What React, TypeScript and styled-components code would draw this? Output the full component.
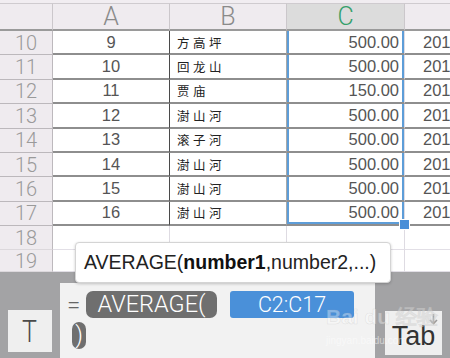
import React from "react";
import styled, { createGlobalStyle, css } from "styled-components";

const Global = createGlobalStyle`
  html, body { margin: 0; padding: 0; background: #fff; }
  body { width: 450px; height: 358px; overflow: hidden; font-family: "Liberation Sans", Arial, sans-serif; }
  * { box-sizing: border-box; }
`;

const Screen = styled.div`
  position: relative;
  width: 450px;
  height: 358px;
  overflow: hidden;
  display: flex;
  flex-direction: column;
`;

const Sheet = styled.div`
  height: 272px;
  flex: none;
  overflow: hidden;
  background: #f1edf1;
  padding-top: 3px;
  display: grid;
  grid-template-columns: 53px 117px 117px 118px 60px;
  grid-template-rows: 28px repeat(8, 24.4px) 24px 22px;
`;

const HeadCell = styled.div<{ $active?: boolean }>`
  border-top: 1px solid #cfcbcf;
  border-right: 1px solid #cbc7cb;
  border-bottom: 2px solid #9a9a9a;
  background: ${(p) => (p.$active ? "#dcdcdc" : "#efebef")};
  color: ${(p) => (p.$active ? "#35a06a" : "#8a8a8a")};
  font-family: Roboto, "Liberation Sans", sans-serif;
  font-weight: 300;
  font-size: 25px;
  display: flex;
  align-items: center;
  justify-content: center;
  line-height: 1;
`;

const RowHead = styled.div<{ $empty?: boolean }>`
  background: #efebef;
  border-right: 1px solid #bdb9bd;
  border-bottom: ${(p) => (p.$empty ? "1px solid #dcd8dc" : "1px solid #bcb8bc")};
  color: #9a9a9a;
  font-family: Roboto, "Liberation Sans", sans-serif;
  font-weight: 300;
  font-size: 20px;
  display: flex;
  align-items: center;
  justify-content: center;
  line-height: 1;
`;

type Align = "center" | "left" | "right";

const Cell = styled.div<{
  $align?: Align;
  $empty?: boolean;
  $cjk?: boolean;
  $divider?: "dark" | "mid" | "light";
  $sel?: boolean;
  $selEnd?: boolean;
}>`
  position: relative;
  background: #fff;
  border-bottom: ${(p) => (p.$empty ? "1px solid #e2dfe6" : "2px solid #8e8e8e")};
  border-right: 1px solid
    ${(p) => (p.$divider === "dark" ? "#4a4a4a" : p.$divider === "mid" ? "#a8a8a8" : "#dedbe2")};
  display: flex;
  align-items: center;
  justify-content: ${(p) =>
    p.$align === "left" ? "flex-start" : p.$align === "right" ? "flex-end" : "center"};
  padding: 0 ${(p) => (p.$align === "right" ? "5px" : "0")} 0
    ${(p) => (p.$align === "left" ? (p.$cjk ? "7px" : "18px") : "0")};
  font-size: ${(p) => (p.$cjk ? "12.5px" : "16.5px")};
  letter-spacing: ${(p) => (p.$cjk ? "3.5px" : "0")};
  font-family: ${(p) =>
    p.$cjk ? `"Noto Sans CJK SC", sans-serif` : `"Liberation Sans", Arial, sans-serif`};
  color: ${(p) => (p.$cjk ? "#222" : "#555")};
  white-space: nowrap;
  ${(p) =>
    p.$sel &&
    css`
      box-shadow: inset 2px 0 0 #5d9dd8, inset -2px 0 0 #5d9dd8
        ${p.$selEnd ? ", inset 0 -2px 0 #5d9dd8" : ""};
    `}
`;

const Handle = styled.span`
  position: absolute;
  right: -6px;
  bottom: -6px;
  width: 11px;
  height: 11px;
  background: #4a8fd8;
  border: 1px solid #fff;
  z-index: 2;
`;

const Tooltip = styled.div`
  position: absolute;
  left: 75px;
  top: 242px;
  width: 316px;
  height: 41px;
  background: #fff;
  border: 1px solid #d4d4d4;
  border-radius: 4px;
  box-shadow: 0 1px 3px rgba(0, 0, 0, 0.2);
  display: flex;
  align-items: center;
  padding-left: 8px;
  font-family: "Liberation Sans", Arial, sans-serif;
  font-size: 19.5px;
  color: #222;
  z-index: 5;
  white-space: nowrap;
  b { font-weight: 700; color: #111; }
`;

const Bar = styled.div`
  flex: 1;
  background: #a3a3a5;
  display: flex;
  align-items: flex-end;
  padding-left: 8px;
`;

const KeyButton = styled.div<{ $w: number; $h: number; $mb: number }>`
  position: relative;
  width: ${(p) => p.$w}px;
  height: ${(p) => p.$h}px;
  margin-bottom: ${(p) => p.$mb}px;
  background: #efefef;
  display: flex;
  align-items: center;
  justify-content: center;
  flex: none;
`;

const TGlyph = styled.span`
  font-family: Roboto, "Liberation Sans", sans-serif;
  font-weight: 300;
  font-size: 32px;
  line-height: 1;
  color: #4a4a4a;
  transform: scaleX(0.78);
`;

const TabText = styled.span`
  font-family: "Liberation Sans", Arial, sans-serif;
  font-size: 27px;
  line-height: 1;
  color: #333;
  margin-top: 6px;
`;

const Arrow = styled.svg`
  position: absolute;
  right: 4px;
  top: 3px;
`;

const Formula = styled.div`
  width: 315px;
  height: 75px;
  margin-left: 8px;
  margin-right: 10px;
  background: #f2f2f2;
  padding: 8px 0 0 7px;
  display: flex;
  flex-direction: column;
  gap: 4px;
  flex: none;
`;

const Line = styled.div`
  display: flex;
  align-items: center;
`;

const Eq = styled.span`
  font-family: Roboto, "Liberation Sans", sans-serif;
  font-weight: 300;
  font-size: 24px;
  color: #666;
  width: 19px;
  line-height: 1;
`;

const Pill = styled.span<{ $blue?: boolean; $w: number; $ml?: number }>`
  display: inline-flex;
  align-items: center;
  justify-content: center;
  width: ${(p) => p.$w}px;
  height: 27px;
  margin-left: ${(p) => p.$ml ?? 0}px;
  border-radius: ${(p) => (p.$blue ? "3px" : "7px")};
  background: ${(p) => (p.$blue ? "#4a90d9" : "#6f6f6f")};
  color: #fff;
  font-family: Roboto, "Liberation Sans", sans-serif;
  font-weight: 300;
  font-size: ${(p) => (p.$blue ? "21.5px" : "23.5px")};
  line-height: 1;
  overflow: hidden;
  white-space: nowrap;
`;

const Watermark = styled.div`
  position: absolute;
  left: 326px;
  top: 306px;
  font-family: "Liberation Sans", Arial, sans-serif;
  font-weight: 700;
  font-size: 21px;
  color: rgba(255, 255, 255, 0.35);
  -webkit-text-stroke: 0.5px rgba(170, 170, 170, 0.3);
  pointer-events: none;
  z-index: 6;
  line-height: 1;
  small {
    display: block;
    font-size: 10px;
    font-weight: 400;
    margin-top: 9px;
    -webkit-text-stroke: 0;
    color: rgba(255, 255, 255, 0.5);
  }
`;

const rows: [number, string, string][] = [
  [9, "方高坪", "500.00"],
  [10, "回龙山", "500.00"],
  [11, "贾庙", "150.00"],
  [12, "澍山河", "500.00"],
  [13, "滚子河", "500.00"],
  [14, "澍山河", "500.00"],
  [15, "澍山河", "500.00"],
  [16, "澍山河", "500.00"],
];

export default function App() {
  return (
    <Screen>
      <Global />
      <Sheet>
        <HeadCell />
        <HeadCell>A</HeadCell>
        <HeadCell>B</HeadCell>
        <HeadCell $active>C</HeadCell>
        <HeadCell />
        {rows.map(([n, name, amt], i) => {
          const last = i === rows.length - 1;
          return (
            <React.Fragment key={n}>
              <RowHead>{n + 1}</RowHead>
              <Cell $divider="dark">{n}</Cell>
              <Cell $align="left" $cjk $divider="mid">
                {name}
              </Cell>
              <Cell $align="right" $divider="light" $sel $selEnd={last}>
                {amt}
                {last && <Handle />}
              </Cell>
              <Cell $align="left" $divider="light">
                201
              </Cell>
            </React.Fragment>
          );
        })}
        {[18, 19].map((r) => (
          <React.Fragment key={r}>
            <RowHead $empty>{r}</RowHead>
            <Cell $empty $divider="light" />
            <Cell $empty $divider="light" />
            <Cell $empty $divider="light" />
            <Cell $empty $divider="light" />
          </React.Fragment>
        ))}
      </Sheet>
      <Tooltip>
        AVERAGE(<b>number1</b>,number2,...)
      </Tooltip>
      <Bar>
        <KeyButton $w={44} $h={42} $mb={6}>
          <TGlyph>T</TGlyph>
        </KeyButton>
        <Formula>
          <Line>
            <Eq>=</Eq>
            <Pill $w={131}>AVERAGE(</Pill>
            <Pill $blue $w={124} $ml={13}>
              C2:C17
            </Pill>
          </Line>
          <Line>
            <Pill $w={14} $ml={5}>)</Pill>
          </Line>
        </Formula>
        <KeyButton $w={57} $h={44} $mb={3}>
          <TabText>Tab</TabText>
          <Arrow width="9" height="11" viewBox="0 0 9 11">
            <path d="M4.5 0 V9 M1 6 L4.5 9.5 L8 6" stroke="#9a9a9a" strokeWidth="1.6" fill="none" />
          </Arrow>
        </KeyButton>
      </Bar>
      <Watermark>
        Bai du 经验
        <small>jingyan.baidu.com</small>
      </Watermark>
    </Screen>
  );
}
